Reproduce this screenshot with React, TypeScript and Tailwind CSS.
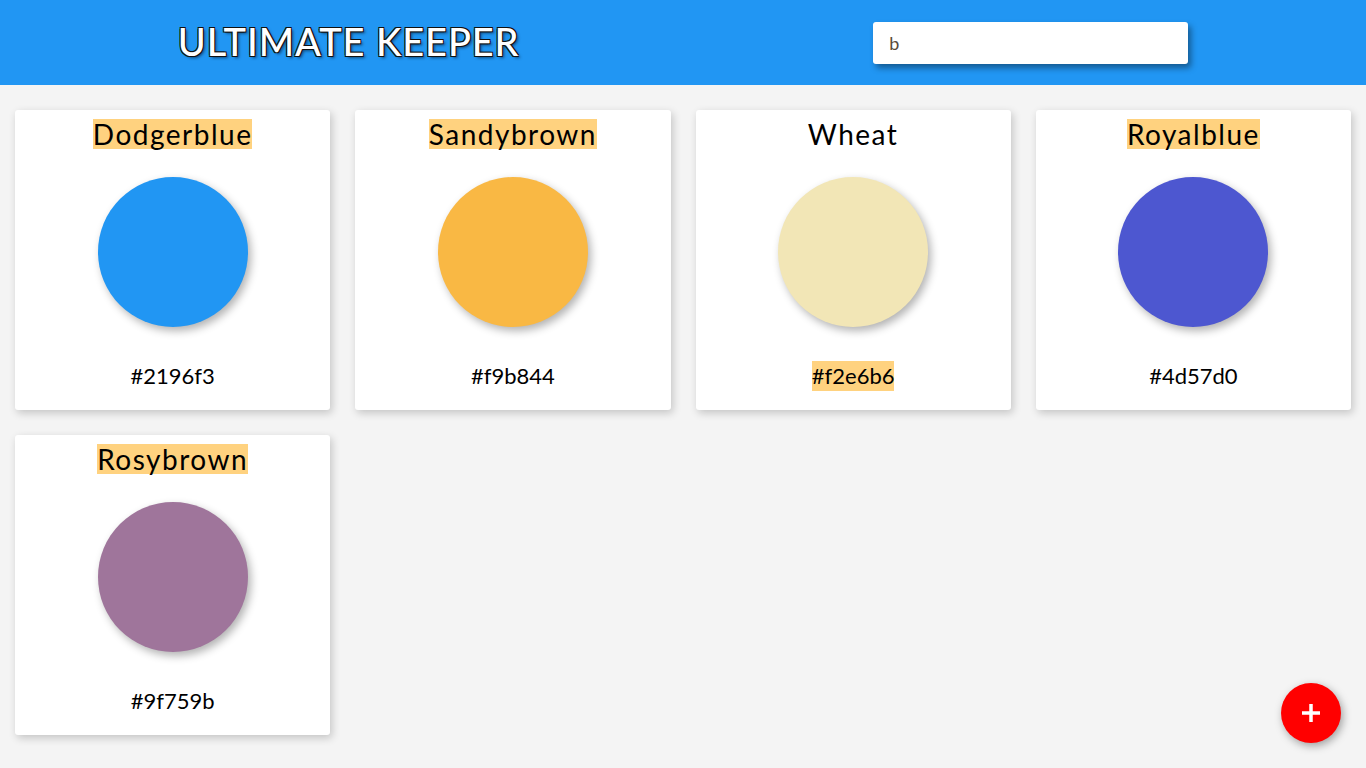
import React, { useState } from 'react';

interface Swatch {
  name: string;
  hex: string;
  hitName: boolean;
  hitHex: boolean;
}

const swatches: Swatch[] = [
  { name: 'Dodgerblue', hex: '#2196f3', hitName: true, hitHex: false },
  { name: 'Sandybrown', hex: '#f9b844', hitName: true, hitHex: false },
  { name: 'Wheat', hex: '#f2e6b6', hitName: false, hitHex: true },
  { name: 'Royalblue', hex: '#4d57d0', hitName: true, hitHex: false },
  { name: 'Rosybrown', hex: '#9f759b', hitName: true, hitHex: false },
];

function ColorCard({ swatch }: { swatch: Swatch }) {
  return (
    <div className="h-[300px] bg-white rounded-[3px] shadow-[2px_3px_8px_rgba(0,0,0,0.2)] flex flex-col items-center">
      <div className="h-[48px] flex items-center">
        <span className={`text-[28px] leading-[30px] tracking-[1.5px] text-black ${swatch.hitName ? 'bg-[#ffd27f]' : ''}`}>
          {swatch.name}
        </span>
      </div>
      <div
        className="mt-[19px] w-[150px] h-[150px] rounded-full shadow-[3px_4px_8px_rgba(0,0,0,0.3)]"
        style={{ backgroundColor: swatch.hex }}
      />
      <div className="mt-[34px] h-[30px] flex items-center">
        <span className={`text-[22px] leading-[30px] text-black ${swatch.hitHex ? 'bg-[#ffd27f]' : ''}`}>
          {swatch.hex}
        </span>
      </div>
    </div>
  );
}

export default function App() {
  const [query, setQuery] = useState('b');

  return (
    <div className="min-h-screen bg-[#f4f4f4] font-['Lato',sans-serif]">
      <header className="h-[85px] bg-[#2196f3] flex items-center justify-around">
        <h1 className="w-[340px] mb-[4px] text-center text-[38px] leading-none font-medium whitespace-nowrap text-white tracking-[0.9px] [text-shadow:1px_1px_0_#111,-1px_-1px_0_#111,1px_-1px_0_#111,-1px_1px_0_#111,2px_2px_3px_rgba(0,0,0,0.5)]">
          ULTIMATE KEEPER
        </h1>
        <input
          value={query}
          onChange={(e) => setQuery(e.target.value)}
          className="w-[315px] h-[42px] mt-[1px] bg-white rounded-[3px] px-[16px] text-[18px] text-[#5a4a3a] outline-none shadow-[3px_4px_6px_rgba(0,0,0,0.4)]"
        />
      </header>

      <main className="grid grid-cols-4 gap-[25px] px-[15px] pt-[25px] pb-[25px]">
        {swatches.map((s) => (
          <ColorCard key={s.hex} swatch={s} />
        ))}
      </main>

      <button className="fixed right-[25px] bottom-[25px] w-[60px] h-[60px] rounded-full bg-[#ff0000] shadow-[2px_3px_8px_rgba(0,0,0,0.35)] flex items-center justify-center">
        <svg width="20" height="20" viewBox="0 0 20 20">
          <path d="M10 1v18M1 10h18" stroke="white" strokeWidth="3.5" />
        </svg>
      </button>
    </div>
  );
}
